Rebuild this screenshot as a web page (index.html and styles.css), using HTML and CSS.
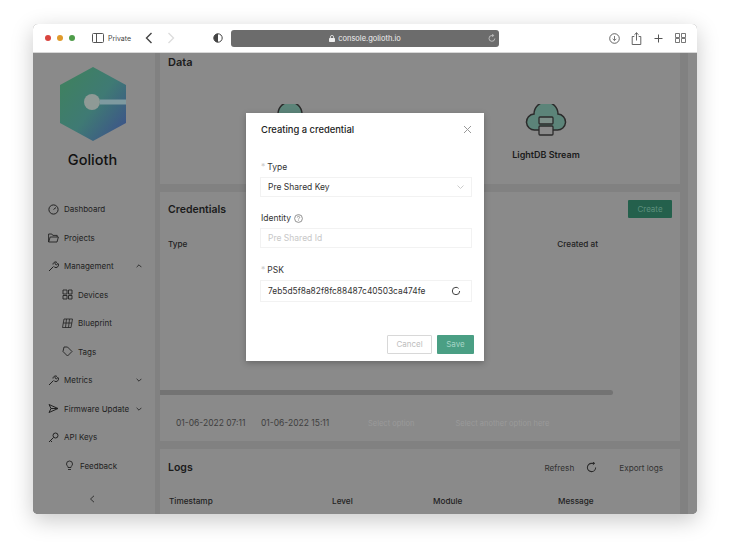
FILE: index.html
```html
<!DOCTYPE html>
<html lang="en">
<head>
<meta charset="utf-8">
<title>Golioth console</title>
<link rel="stylesheet" href="styles.css">
</head>
<body>
<div class="window">
  <header class="toolbar">
    <div class="lights"><i class="light red"></i><i class="light amber"></i><i class="light green"></i></div>
    <svg class="tb-tabs" width="12" height="10" viewBox="0 0 12 10"><rect x=".5" y=".5" width="11" height="9" rx="1" fill="none" stroke="#555"/><path d="M4.5 .5v9" stroke="#555"/></svg>
    <span class="private">Private</span>
    <svg class="back" width="8" height="12" viewBox="0 0 8 12"><path d="M6.5 1 1.500 6l5 5" fill="none" stroke="#444" stroke-width="1.400"/></svg>
    <svg class="forward" width="8" height="12" viewBox="0 0 8 12"><path d="M1.500 1l5 5-5 5" fill="none" stroke="#ddd" stroke-width="1.400"/></svg>
    <svg class="shield" width="10" height="10" viewBox="0 0 10 10"><circle cx="5" cy="5" r="4.200" fill="none" stroke="#444"/><path d="M5 .8a4.200 4.200 0 0 0 0 8.400z" fill="#444"/></svg>
    <div class="urlbar">
      <span class="url"><svg width="6" height="7" viewBox="0 0 6 7"><rect y="3" width="6" height="4" rx=".7" fill="#eee"/><path d="M1.400 3V2a1.600 1.600 0 0 1 3.200 0v1" fill="none" stroke="#eee" stroke-width=".8"/></svg>console.golioth.io</span>
      <svg class="reload" width="8" height="10" viewBox="0 0 8 10"><path d="M6.800 5.500a2.900 2.900 0 1 1-2.800-3h1.400M4.300 1l1.300 1.500L4.300 4" fill="none" stroke="#ccc" stroke-width=".8"/></svg>
    </div>
    <div class="tb-actions">
      <svg width="11" height="11" viewBox="0 0 11 11"><circle cx="5.500" cy="5.500" r="4.800" fill="none" stroke="#555" stroke-width=".9"/><path d="M5.500 3v4.400M3.700 5.800l1.800 1.800 1.800-1.800" fill="none" stroke="#555" stroke-width=".8"/></svg>
      <svg width="11" height="13" viewBox="0 0 11 13"><path d="M3.300 4.500H1.200v8h8.600v-8H7.700M5.500 8.500V.8M3.400 2.800 5.500.8l2.100 2" fill="none" stroke="#555" stroke-width=".9"/></svg>
      <svg width="11" height="11" viewBox="0 0 11 11"><path d="M5.500 1.500v8M1.500 5.500h8" stroke="#555" stroke-width="1"/></svg>
      <svg width="11" height="10" viewBox="0 0 11 10"><path d="M.5.500h4v4h-4zM6.500.5h4v4h-4zM.5 5.500h4v4h-4zM6.500 5.500h4v4h-4z" fill="none" stroke="#555" stroke-width=".8"/></svg>
    </div>
  </header>

  <div class="app">
    <aside class="sidebar">
      <div class="brand">
        <svg class="logo" width="66" height="74" viewBox="0 0 66 74">
          <defs><linearGradient id="hex" x1="0.1" y1="0.2" x2="0.9" y2="0.9"><stop offset="0" stop-color="#3f8062"/><stop offset=".5" stop-color="#3f7a74"/><stop offset="1" stop-color="#3d5688"/></linearGradient></defs>
          <path d="M33 0 66 18v38L33 74 0 56V18z" fill="url(#hex)"/>
          <path d="M40 32.500h26v5H40z" fill="#7f9aa0"/>
          <circle cx="32" cy="35" r="8" fill="#8f9a96"/>
        </svg>
        <span class="brand-name">Golioth</span>
      </div>
      <nav class="nav">
        <a class="nav-item"><svg width="11" height="11" viewBox="0 0 11 11"><circle cx="5.500" cy="5.500" r="4.600" fill="none" stroke="#222"/><path d="M5.500 5.500 8 3.500" stroke="#222"/></svg>Dashboard</a>
        <a class="nav-item"><svg width="11" height="10" viewBox="0 0 11 10"><path d="M.6 9V1h3.200l1 1.400h4.400V4M.6 9l1.600-5h8.200L9 9z" fill="none" stroke="#222" stroke-width=".9"/></svg>Projects</a>
        <a class="nav-item"><svg width="11" height="11" viewBox="0 0 11 11"><path d="M1 10l4.500-4.500M5 3.500a2.600 2.600 0 0 1 3.600-2.400L7 2.700l1.300 1.300L10 2.400A2.600 2.600 0 0 1 6.300 6" fill="none" stroke="#222"/></svg>Management<svg class="chev" width="6" height="4" viewBox="0 0 6 4"><path d="M.6 3.200 3 .8l2.400 2.400" fill="none" stroke="#333"/></svg></a>
        <a class="nav-item sub"><svg width="11" height="11" viewBox="0 0 11 11"><path d="M1 1h4v4H1zM6.500 1h3.500v4H6.500zM1 6.500h4V10H1zM6.500 6.500h3.500V10H6.500z" fill="none" stroke="#222" stroke-width=".9"/></svg>Devices</a>
        <a class="nav-item sub"><svg width="11" height="10" viewBox="0 0 11 10"><path d="M.5 9.500 2 1h8.500L9 9.500zM4.500 1 3.500 9.500M7.500 1 6.500 9.500M1.300 5h8.600" fill="none" stroke="#222" stroke-width=".8"/></svg>Blueprint</a>
        <a class="nav-item sub"><svg width="11" height="11" viewBox="0 0 11 11"><path d="M5.500 1 10 5.500 5.500 10 1 5.500 2 1z" fill="none" stroke="#222" stroke-width=".9"/></svg>Tags</a>
        <a class="nav-item"><svg width="11" height="11" viewBox="0 0 11 11"><path d="M1 10l4.500-4.500M5 3.500a2.600 2.600 0 0 1 3.600-2.400L7 2.700l1.300 1.300L10 2.400A2.600 2.600 0 0 1 6.300 6" fill="none" stroke="#222"/></svg>Metrics<svg class="chev" width="6" height="4" viewBox="0 0 6 4"><path d="M.6.800 3 3.200 5.400.8" fill="none" stroke="#333"/></svg></a>
        <a class="nav-item"><svg width="11" height="11" viewBox="0 0 11 11"><path d="M1 1.500 10 5.500 1 9.500l2-4zM3 5.500h7" fill="none" stroke="#222"/></svg>Firmware Update<svg class="chev" width="6" height="4" viewBox="0 0 6 4"><path d="M.6.800 3 3.200 5.400.8" fill="none" stroke="#333"/></svg></a>
        <a class="nav-item"><svg width="11" height="11" viewBox="0 0 11 11"><circle cx="7.500" cy="3.500" r="2.500" fill="none" stroke="#222"/><path d="M5.500 5.500 1 10M2.500 8.500l1.500 1.500" fill="none" stroke="#222"/></svg>API Keys</a>
        <a class="nav-item feedback"><svg width="9" height="11" viewBox="0 0 9 11"><path d="M1.500 4a3 3 0 1 1 6 0c0 1.500-1.500 2-1.500 3.500H3C3 6 1.500 5.500 1.500 4zM3 9.500h3" fill="none" stroke="#222" stroke-width=".9"/></svg>Feedback</a>
      </nav>
      <svg class="collapse" width="6" height="8" viewBox="0 0 6 8"><path d="M5 .8 1.500 4 5 7.200" fill="none" stroke="#333"/></svg>
    </aside>

    <main class="content">
      <section class="card data">
        <h2 class="data-title">Data</h2>
        <div class="streams">
          <div class="stream">
            <svg width="44" height="36" viewBox="0 0 44 36"><path d="M11 26a8 8 0 0 1-1-16 12 12 0 0 1 24 0 8 8 0 0 1-1 16z" fill="#5c8479" stroke="#2b2b2b" stroke-width="1.500"/></svg>
            <span>LightDB State</span>
          </div>
          <div class="stream">
            <svg width="44" height="36" viewBox="0 0 44 36"><path d="M11 26a8 8 0 0 1-1-16 12 12 0 0 1 24 0 8 8 0 0 1-1 16z" fill="#5c8479" stroke="#2b2b2b" stroke-width="1.500"/><rect x="15" y="13" width="14" height="7" rx="1" fill="#7d8f89" stroke="#2b2b2b" stroke-width="1.300"/><rect x="15" y="22" width="14" height="9" rx="1" fill="#8a8a8a" stroke="#2b2b2b" stroke-width="1.300"/></svg>
            <span>LightDB Stream</span>
          </div>
        </div>
      </section>

      <section class="card credentials">
        <div class="card-head">
          <h2>Credentials</h2>
          <button class="create">Create</button>
        </div>
        <div class="cred-cols">
          <span>Type</span>
          <span>Created at</span>
        </div>
        <div class="scrollbar"></div>
        <div class="dates">
          <span>01-06-2022 07:11</span>
          <span>01-06-2022 15:11</span>
          <span class="faint first">Select option</span>
          <span class="faint second">Select another option here</span>
        </div>
      </section>

      <section class="card logs">
        <div class="card-head logs-head">
          <h2>Logs</h2>
          <div class="logs-tools">
            <span>Refresh</span>
            <svg width="11" height="11" viewBox="0 0 12 12"><path d="M10.500 6A4.500 4.500 0 1 1 6 1.500H9" fill="none" stroke="#2a2a2a" stroke-width="1.100"/><path d="M7.500 0 9.500 1.500 7.500 3" fill="none" stroke="#2a2a2a"/></svg>
            <span>Export logs</span>
          </div>
        </div>
        <div class="log-cols"><span>Timestamp</span><span>Level</span><span>Module</span><span>Message</span></div>
      </section>
    </main>
    <div class="rail"></div>
  </div>

  <div class="modal">
    <div class="modal-head"><h3>Creating a credential</h3>
      <svg width="9" height="9" viewBox="0 0 9 9"><path d="M1 1l7 7M8 1 1 8" stroke="#999"/></svg></div>
    <div class="field field-type">
      <label><em>*</em>Type</label>
      <div class="control"><span>Pre Shared Key</span><svg width="7" height="4" viewBox="0 0 7 4"><path d="M.5.500 3.500 3.500 6.500.5" fill="none" stroke="#ccc"/></svg></div>
    </div>
    <div class="field field-identity">
      <label>Identity <svg width="9" height="9" viewBox="0 0 9 9"><circle cx="4.500" cy="4.500" r="3.900" fill="none" stroke="#777" stroke-width=".8"/><path d="M3.300 3.500a1.200 1.200 0 1 1 1.800 1c-.4.200-.6.500-.6.900M4.500 6.400v.6" fill="none" stroke="#777" stroke-width=".7"/></svg></label>
      <div class="control"><span class="placeholder">Pre Shared Id</span></div>
    </div>
    <div class="field">
      <label><em>*</em>PSK</label>
      <div class="control psk"><span>7eb5d5f8a82f8fc88487c40503ca474fe</span><svg width="10" height="10" viewBox="0 0 10 10"><path d="M8.700 5A3.700 3.700 0 1 1 5 1.300a3.700 3.700 0 0 1 2.600 1.100" fill="none" stroke="#444"/></svg></div>
    </div>
    <div class="modal-foot">
      <button class="btn-cancel">Cancel</button>
      <button class="btn-save">Save</button>
    </div>
  </div>
</div>
</body>
</html>
```

FILE: styles.css
```css
* { box-sizing: border-box; }
html, body { margin: 0; height: 100%; }
body {
  background: #fff;
  overflow: hidden;
  padding: 24px 33px 0;
  font-family: Inter, "Liberation Sans", sans-serif;
  color: #222;
}
h2, h3 { margin: 0; }

.window {
  position: relative;
  width: 664px;
  height: 490px;
  display: flex;
  flex-direction: column;
  border-radius: 5px;
  box-shadow: 0 6px 22px rgba(0, 0, 0, .22);
  background: #8a8a8a;
}

.toolbar {
  height: 29px;
  flex: none;
  display: flex;
  align-items: center;
  background: #fff;
  border-radius: 5px 5px 0 0;
  padding-left: 12px;
  border-bottom: 1px solid #d8d8d8;
}
.lights { display: flex; gap: 6px; }
.light { width: 6px; height: 6px; border-radius: 50%; }
.red { background: #d9453f; }
.amber { background: #e09a2b; }
.green { background: #4f9d4a; }
.tb-tabs { margin-left: 17px; }
.private { margin-left: 4px; font-size: 7px; color: #444; width: 26px; }
.back { margin-left: 11px; }
.forward { margin-left: 14px; }
.shield { margin-left: 38px; }
.urlbar {
  margin-left: 8px;
  width: 268px;
  height: 17px;
  background: #6c6c6c;
  border-radius: 3px;
  display: flex;
  align-items: center;
  justify-content: center;
  position: relative;
  color: #f0f0f0;
  font-size: 7.500px;
}
.url { display: flex; align-items: center; gap: 3px; }
.reload { position: absolute; right: 3px; top: 3px; }
.tb-actions {
  margin-left: 110px;
  display: flex;
  align-items: center;
  gap: 11px;
}

.app {
  flex: 1;
  min-height: 0;
  display: flex;
  overflow: hidden;
  border-radius: 0 0 5px 5px;
  background: #818181;
}

.sidebar {
  width: 122px;
  flex: none;
  background: #8a8a8a;
  display: flex;
  flex-direction: column;
}
.brand {
  height: 142px;
  display: flex;
  flex-direction: column;
  align-items: center;
  padding-top: 14px;
  flex: none;
}
.brand-name { margin-top: 10px; font-size: 14.500px; font-weight: 500; color: #111; margin-left: -3px; }
.logo { margin-left: -3px; }
.nav { display: flex; flex-direction: column; }
.nav-item {
  height: 28.500px;
  display: flex;
  align-items: center;
  gap: 5px;
  padding-left: 15px;
  padding-right: 13px;
  font-size: 8px;
  color: #222;
  white-space: nowrap;
}
.nav-item.sub { padding-left: 29px; }
.nav-item.feedback { padding-left: 32px; gap: 6px; }
.chev { margin-left: auto; flex: none; }
.collapse { margin: 15px auto 0; display: block; position: relative; left: -2px; }

.content {
  flex: none;
  width: 520px;
  margin: 0 8px 0 5px;
  display: flex;
  flex-direction: column;
  gap: 8px;
}
.rail { flex: 1; background: #8a8a8a; }
.card { background: #8a8a8a; flex: none; }
.data { height: 131px; padding: 3px 8px 0; }
.data-title { font-size: 11px; font-weight: 600; color: #1b1b1b; line-height: 12px; }
.streams { display: flex; padding-top: 36px; }
.stream {
  display: flex;
  flex-direction: column;
  align-items: center;
  gap: 9px;
  font-size: 9px;
  font-weight: 600;
  color: #1b1b1b;
  white-space: nowrap;
}
.stream:first-child { margin-left: 86px; width: 72px; }
.stream:last-child { margin-left: 175px; width: 90px; }

.credentials { height: 249px; padding: 8px 8px 0; }
.card-head { display: flex; align-items: center; justify-content: space-between; }
.card-head h2 { font-size: 10.500px; font-weight: 600; color: #1b1b1b; }
.create {
  width: 44px;
  height: 18px;
  border: 0;
  border-radius: 1px;
  background: #24604c;
  color: #5d8f7d;
  font: 8px Inter, sans-serif;
  padding: 0;
}
.cred-cols {
  display: flex;
  justify-content: space-between;
  padding-right: 74px;
  margin-top: 21px;
  font-size: 8.200px;
  font-weight: 500;
  color: #222;
}
.scrollbar {
  margin: 141px 0 0 -8px;
  width: 453px;
  height: 5px;
  border-radius: 0 3px 3px 0;
  background: #737373;
}
.dates {
  display: flex;
  align-items: center;
  margin-top: 23px;
  padding-left: 8px;
  font-size: 8.500px;
  color: #3f3f3f;
  gap: 16px;
}
.dates span { width: 69px; white-space: nowrap; }
.dates .faint { color: #9a9a9a; font-size: 7.500px; width: auto; }
.dates .first { margin-left: 22px; }
.dates .second { margin-left: 25px; }

.logs { flex: 1; padding: 12px 8px 0; }
.logs-tools { display: flex; align-items: center; gap: 12px; font-size: 8.200px; color: #333; padding-right: 9px; }
.logs-tools span:last-child { margin-left: 10px; }
.log-cols {
  display: grid;
  grid-template-columns: 163px 101px 125px 1fr;
  margin-top: 22px;
  font-size: 8.200px;
  font-weight: 500;
  color: #222;
  padding-left: 1px;
}

.modal {
  position: absolute;
  left: 213px;
  top: 89px;
  width: 238px;
  height: 248px;
  background: #fff;
  padding: 10px 12px 0 14px;
  display: flex;
  flex-direction: column;
  box-shadow: 0 2px 6px rgba(0, 0, 0, .25);
}
.modal-head { display: flex; align-items: center; justify-content: space-between; height: 12px; margin-bottom: 27px; padding-left: 1px; }
.modal-head h3 { font-size: 9.400px; font-weight: 500; color: #222; }
.field { display: flex; flex-direction: column; margin-bottom: 16.500px; }
.field-type { margin-bottom: 15.500px; }
.field-identity { margin-bottom: 17.500px; }
.field label { font-size: 8.500px; color: #333; line-height: 11px; margin-bottom: 4px; display: flex; align-items: center; gap: 3px; height: 11px; padding-left: 1px; }
.field em { font-style: normal; color: #ccc; margin-right: -1px; }
.control {
  height: 20px;
  border: 1px solid #f2f2f2;
  display: flex;
  align-items: center;
  justify-content: space-between;
  padding: 0 7px;
  font-size: 8.500px;
  color: #333;
}
.placeholder { color: #c8c8c8; }
.psk { height: 22px; padding-right: 10px; font-size: 8.400px; }
.modal-foot { display: flex; justify-content: flex-end; gap: 5px; margin-top: 16px; margin-right: -2px; }
.btn-cancel, .btn-save { height: 19px; font: 8px Inter, sans-serif; padding: 0; border-radius: 1px; }
.btn-cancel { width: 45px; background: #fff; border: 1px solid #d8d8d8; color: #bdbdbd; }
.btn-save { width: 37px; background: #4a9f84; border: 0; color: #a7d5c6; }
```
